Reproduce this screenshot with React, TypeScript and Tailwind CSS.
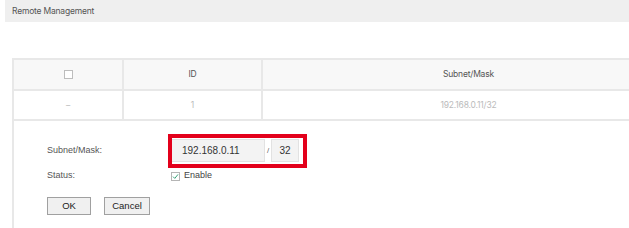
import React from "react";

export default function App() {
  return (
    <div className="relative w-[629px] h-[228px] overflow-hidden bg-white" style={{ fontFamily: "Inter, 'Liberation Sans', sans-serif" }}>
      <div className="ml-[5px] h-[22px] bg-[#efefef] flex items-center pl-[7px] text-[8.5px] text-[#555] tracking-[-0.2px]">
        Remote Management
      </div>
      <div className="mt-[36px] ml-[12px] w-[680px] border-l-2 border-t-2 border-[#e8e8e8] h-[200px]">
        <div className="grid grid-cols-[110px_139px_411px] h-[31px] bg-[#f8f8f8] border-b-2 border-[#e8e8e8] text-[8.5px] text-[#555] tracking-[-0.2px]">
          <div className="flex items-center justify-center border-r-2 border-[#e8e8e8]">
            <div className="w-[9px] h-[9px] border border-[#bdbdbd] bg-white" />
          </div>
          <div className="flex items-center justify-center border-r-2 border-[#e8e8e8]">ID</div>
          <div className="flex items-center justify-center">Subnet/Mask</div>
        </div>
        <div className="grid grid-cols-[110px_139px_411px] h-[30px] bg-white border-b-2 border-[#e8e8e8] text-[8.5px] text-[#bbb] tracking-[-0.2px]">
          <div className="flex items-center justify-center border-r-2 border-[#e8e8e8]">–</div>
          <div className="flex items-center justify-center border-r-2 border-[#e8e8e8]">1</div>
          <div className="flex items-center justify-center">192.168.0.11/32</div>
        </div>
        <div className="pl-[33px] pt-[18px]" style={{ fontFamily: "'Liberation Sans', Arial, sans-serif" }}>
          <div className="flex items-center h-[23px]">
            <div className="w-[124px] text-[9px] text-[#555]">Subnet/Mask:</div>
            <div className="w-[94px] h-[23px] bg-[#f3f3f3] border border-[#e2e2e2] flex items-center pl-[10px] text-[10px] text-[#333]">192.168.0.11</div>
            <div className="w-[6px] text-center text-[8px] text-[#666]">/</div>
            <div className="w-[28px] h-[23px] bg-[#f3f3f3] border border-[#e2e2e2] flex items-center justify-center text-[10px] text-[#333]">32</div>
          </div>
          <div className="flex items-center h-[14px] mt-[7px]">
            <div className="w-[124px] text-[9px] text-[#555]">Status:</div>
            <div className="w-[9px] h-[9px] border border-[#b5b5b5] bg-white flex items-center justify-center">
              <svg width="7" height="7" viewBox="0 0 7 7">
                <path d="M1 3.6 L2.8 5.4 L6 1.4" stroke="#3aa37a" strokeWidth="1" fill="none" />
              </svg>
            </div>
            <div className="ml-[4px] text-[9px] text-[#444]">Enable</div>
          </div>
          <div className="flex mt-[14px] gap-[13px]">
            <div className="w-[44px] h-[18px] bg-[#f0f0f0] border border-[#a0a0a0] flex items-center justify-center text-[9.5px] text-[#222]">OK</div>
            <div className="w-[46px] h-[18px] bg-[#f0f0f0] border border-[#a0a0a0] flex items-center justify-center text-[9.5px] text-[#222]">Cancel</div>
          </div>
        </div>
      </div>
      <div className="absolute left-[168px] top-[134px] w-[139px] h-[34px] border-[4px] border-[#e3001b]" />
    </div>
  );
}
